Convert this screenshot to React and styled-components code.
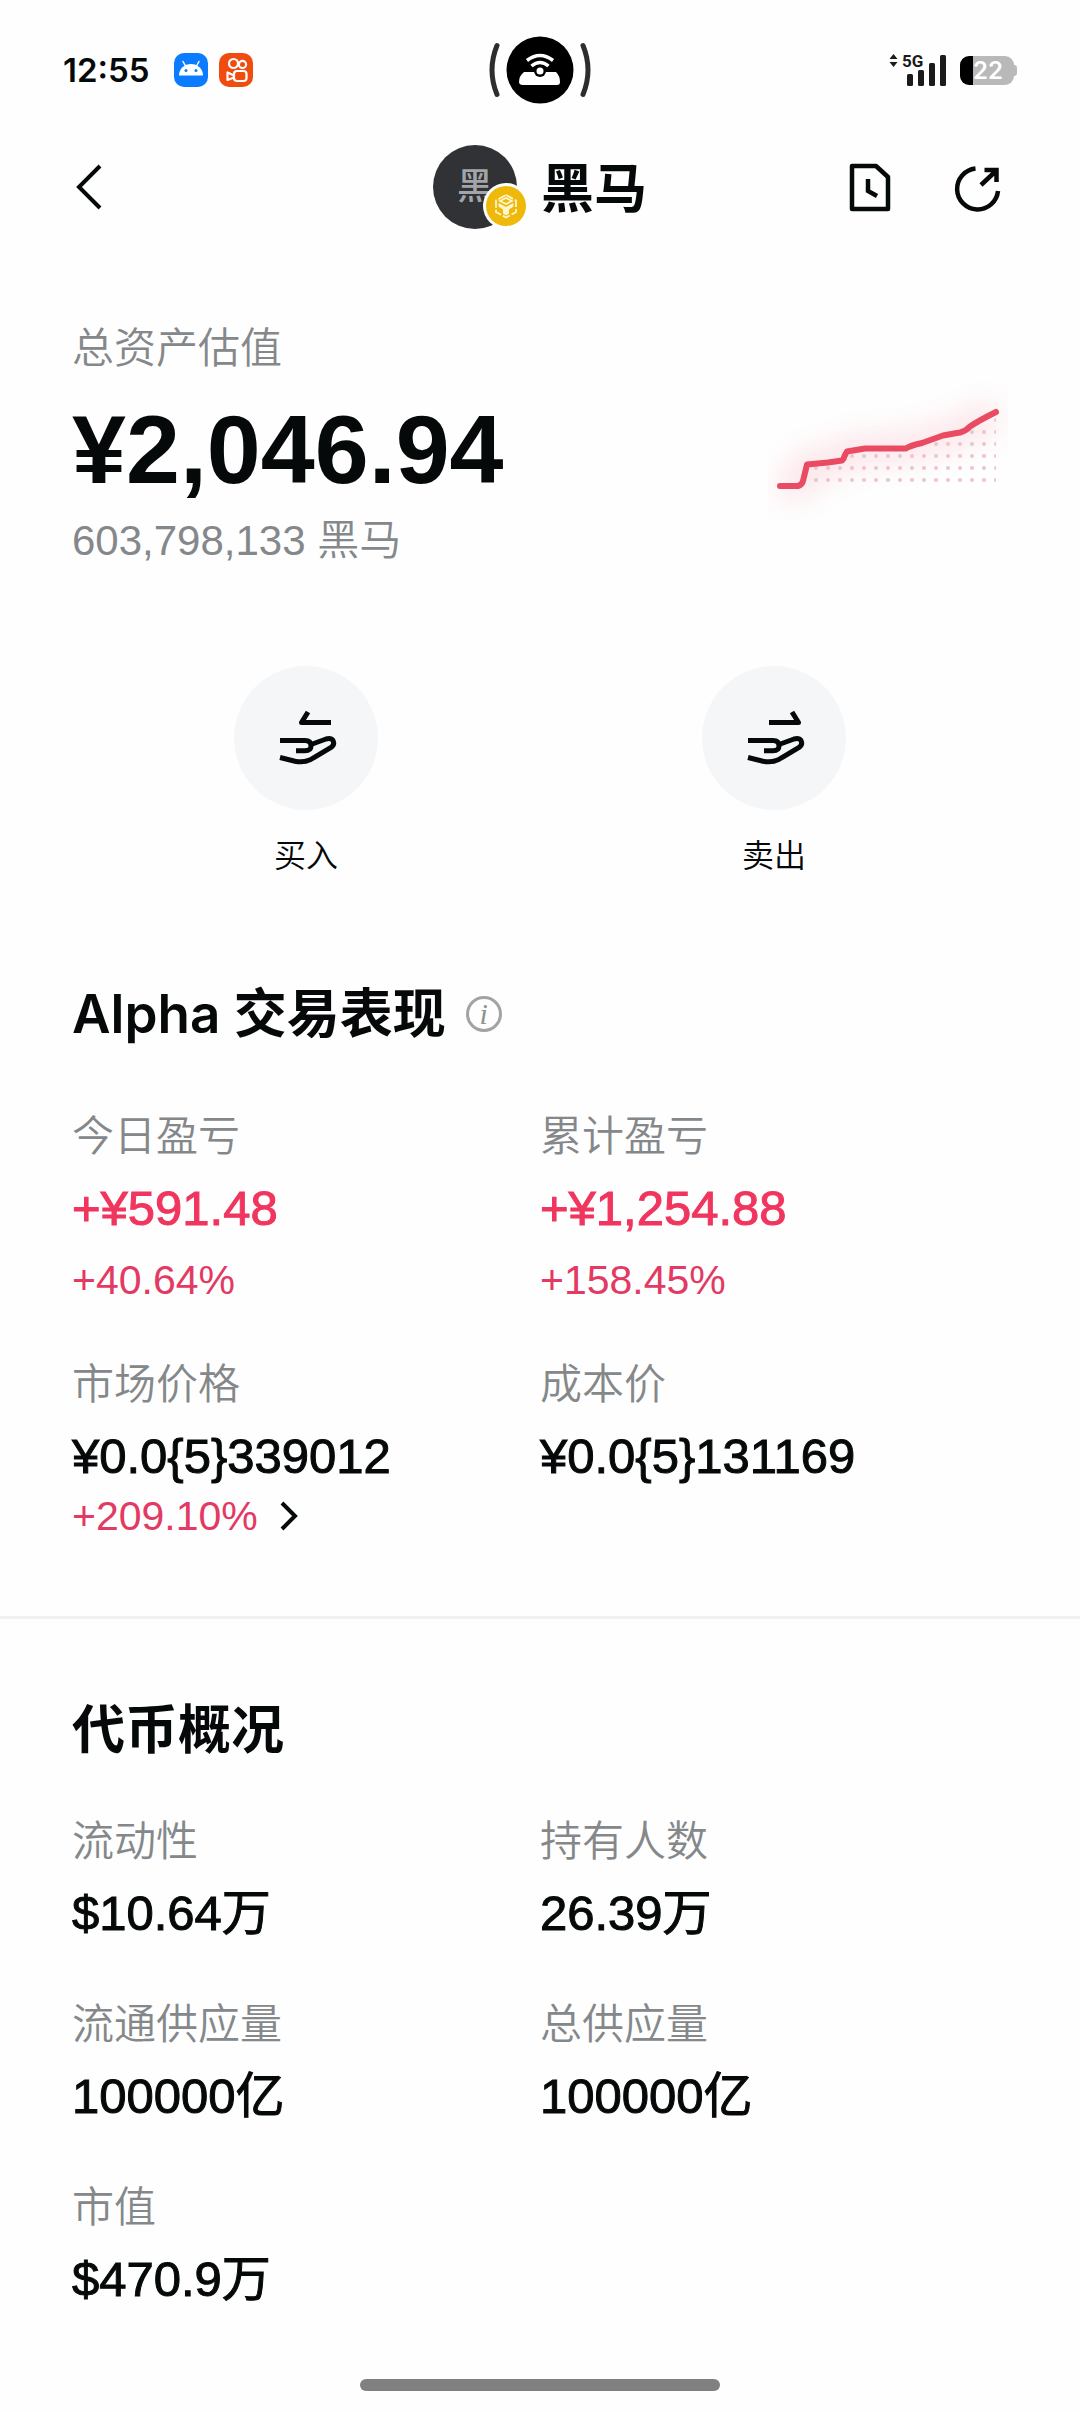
import React from "react";
import styled, { createGlobalStyle } from "styled-components";

const Globalstyle = createGlobalStyle`
*{
  padding: 0;
  margin: 0;
  box-sizing: border-box;
}
body {
  background: #fefefe;
  color: #060909;
  font-family: Inter, "Noto Sans CJK SC", sans-serif;
}
button {
  border: none;
  background: none;
  color: inherit;
  font: inherit;
}
svg {
  display: block;
}
`
const Page = styled.div`
  min-height: 100vh;
  display: flex;
  flex-direction: column;
`
const StatusBar = styled.div`
  height: 140px;
  padding: 0 63px;
  display: grid;
  grid-template-columns: 1fr auto 1fr;
  align-items: center;
`
const StatusSide = styled.div`
  display: flex;
  align-items: center;
  justify-content: ${(p) => (p.$end ? "flex-end" : "flex-start")};
  gap: ${(p) => (p.$end ? "14px" : "11px")};
`
const Clock = styled.time`
  margin-right: 13px;
  font-size: 33px;
  font-weight: 600;
  line-height: 40px;
`
const Battery = styled.div`
  position: relative;
  width: 54px;
  height: 29px;
  margin-right: 3px;
  padding-left: 2px;
  border-radius: 9px;
  background: linear-gradient(to right, #000 13px, #b9b9b9 13px);
  color: #fff;
  font-size: 24px;
  font-weight: 600;
  line-height: 29px;
  text-align: center;
  &::after {
    content: "";
    position: absolute;
    top: 9px;
    right: -3px;
    width: 4px;
    height: 11px;
    border-radius: 0 3px 3px 0;
    background: #b9b9b9;
  }
`
const Header = styled.header`
  height: 94px;
  padding: 0 72px;
  display: grid;
  grid-template-columns: 1fr auto 1fr;
  align-items: center;
`
const HeaderActions = styled.div`
  display: flex;
  justify-content: flex-end;
  gap: 48px;
`
const IconButton = styled.button`
  width: 60px;
  height: 60px;
`
const Token = styled.div`
  display: flex;
  align-items: center;
  gap: 24px;
`
const Avatar = styled.div`
  position: relative;
  width: 84px;
  height: 84px;
  border-radius: 50%;
  background: #303236;
  color: #a3a5a8;
  font-size: 36px;
  font-weight: 500;
  line-height: 82px;
  text-align: center;
`
const ChainBadge = styled.span`
  position: absolute;
  right: -12px;
  bottom: 0;
`
const TokenName = styled.h1`
  padding-top: 3px;
  font-size: 53px;
  font-weight: 600;
  line-height: 64px;
`
const Summary = styled.section`
  padding: 84px 72px 0;
  display: flex;
  align-items: center;
  justify-content: space-between;
`
const Balance = styled.div`
  display: flex;
  flex-direction: column;
`
const Label = styled.dt`
  color: #85888a;
  font-size: 42px;
  font-weight: 350;
  line-height: 64px;
`
const BalanceLabel = styled(Label).attrs({ as: "p" })`
  line-height: 60px;
`
const Total = styled.p`
  margin: 24px 0 15px;
  font-family: "Liberation Sans", sans-serif;
  font-size: 97px;
  font-weight: 700;
  line-height: 96px;
`
const Holding = styled.p`
  color: #85888a;
  font-family: "Liberation Sans", "Noto Sans CJK SC", sans-serif;
  font-size: 42px;
  font-weight: 350;
  line-height: 56px;
`
const Actions = styled.nav`
  padding: 97px 72px 0;
  display: grid;
  grid-template-columns: 1fr 1fr;
  justify-items: center;
`
const Action = styled.button`
  display: flex;
  flex-direction: column;
  align-items: center;
  gap: 22px;
  font-size: 32px;
  font-weight: 350;
  line-height: 48px;
`
const ActionCircle = styled.span`
  width: 144px;
  height: 144px;
  border-radius: 50%;
  background: #f4f6f8;
  display: flex;
  align-items: center;
  justify-content: center;
`
const Section = styled.section`
  padding: ${(p) => p.$top}px 72px 0;
`
const SectionHead = styled.div`
  margin-bottom: ${(p) => p.$gap}px;
  display: flex;
  align-items: center;
  gap: 20px;
`
const SectionTitle = styled.h2`
  font-size: 53px;
  font-weight: 600;
  line-height: 64px;
`
const InfoButton = styled.button`
  width: 36px;
  height: 36px;
  border: 3px solid #a1a3a4;
  border-radius: 50%;
  color: #8f9192;
  font-family: "Liberation Serif", serif;
  font-size: 30px;
  font-style: italic;
  line-height: 28px;
`
const Grid = styled.dl`
  display: grid;
  grid-template-columns: 1fr 1fr;
  row-gap: ${(p) => p.$gap}px;
`
const Value = styled.dd`
  margin-top: 4px;
  color: ${(p) => (p.$up ? "#f0355e" : "inherit")};
  font-family: "Liberation Sans", "Noto Sans CJK SC", sans-serif;
  font-size: 49px;
  line-height: 72px;
  -webkit-text-stroke: 1px currentColor;
`
const Percent = styled.dd`
  margin-top: ${(p) => (p.$tight ? 0 : 12)}px;
  color: #e23a63;
  font-family: "Liberation Sans", "Noto Sans CJK SC", sans-serif;
  font-size: 41px;
  line-height: 48px;
`
const PercentLink = styled.a`
  color: inherit;
  text-decoration: none;
  display: inline-flex;
  align-items: center;
  gap: 22px;
`
const Divider = styled.hr`
  height: 3px;
  margin-top: 76px;
  border: none;
  background: #f1f1f2;
`
const HomeBar = styled.div`
  width: 360px;
  height: 12px;
  margin: auto auto 21px;
  border-radius: 6px;
  background: #808080;
`

const AndroidApp = () => (
  <svg width="34" height="34" viewBox="0 0 34 34">
    <rect width="34" height="34" rx="10" fill="#0b7bff" />
    <path d="M5 22.500a12 11.500 0 0 1 24 0z" fill="#fff" />
    <path d="M11.500 13L9 8.500M22.500 13L25 8.500" stroke="#fff" strokeWidth="1.500" strokeLinecap="round" />
    <circle cx="12" cy="17.500" r="1.500" fill="#0b7bff" />
    <circle cx="22" cy="17.500" r="1.500" fill="#0b7bff" />
  </svg>
)

const VideoApp = () => (
  <svg width="34" height="34" viewBox="0 0 34 34" fill="none" stroke="#fff" strokeWidth="2.200">
    <rect width="34" height="34" rx="10" fill="#f04c0f" stroke="none" />
    <circle cx="14.500" cy="10.500" r="4.500" />
    <circle cx="23.500" cy="11.500" r="3.600" />
    <rect x="15" y="18" width="12.500" height="10" rx="3" />
    <path d="M15 22.500L8.500 19.500V27L15 24.500" strokeLinejoin="round" />
  </svg>
)

const Island = () => (
  <svg width="104" height="70" viewBox="0 0 104 70" fill="none">
    <path d="M9 10.500Q-1 35 9 59.500M95 10.500Q105 35 95 59.500" stroke="#2d2d2d" strokeWidth="5" strokeLinecap="round" />
    <circle cx="52" cy="35" r="33.500" fill="#000" />
    <path d="M36 37H68Q72 41 72 47Q72 50 69 50H35Q31 50 31 47Q31 41 36 37Z" fill="#fff" />
    <circle cx="52" cy="36" r="6" fill="#000" />
    <circle cx="52" cy="36" r="3.500" fill="#fff" />
    <path d="M39 25.500Q52 15.500 65 25.500M43.500 31Q52 24 60.500 31" stroke="#fff" strokeWidth="3.500" />
  </svg>
)

const Signal = () => (
  <svg width="57" height="44" viewBox="0 -5 57 44" fill="#1b1b1b">
    <path d="M4.500 1L8.500 6H.5ZM4.500 14L.5 9H8.500Z" />
    <text x="13" y="14" fontFamily="Roboto, sans-serif" fontSize="17" fontWeight="700">5G</text>
    <rect x="18" y="21" width="6" height="12" rx="1.500" />
    <rect x="29" y="17" width="6" height="16" rx="1.500" />
    <rect x="40" y="10" width="6" height="23" rx="1.500" />
    <rect x="51" y="2" width="6" height="31" rx="1.500" />
  </svg>
)

const BackIcon = () => (
  <svg width="60" height="60" viewBox="0 0 60 60" fill="none" stroke="#060909" strokeWidth="4">
    <path d="M28 9L7 30L28 51" />
  </svg>
)

const HistoryIcon = () => (
  <svg width="60" height="60" viewBox="0 0 60 60" fill="none" stroke="#060909" strokeWidth="4.500" strokeLinejoin="round">
    <path d="M12 9H36L48 20V52H12Z" />
    <path d="M28 22V34L37 39" strokeLinejoin="miter" />
  </svg>
)

const ShareIcon = () => (
  <svg width="60" height="60" viewBox="0 0 60 60" fill="none" stroke="#060909" strokeWidth="4.500">
    <path d="M27.500 11.500A20.500 20.500 0 1 0 50 34" />
    <path d="M33 28L49 13M36.500 13H48.500V25" />
  </svg>
)

const BnbIcon = () => (
  <svg width="46" height="46" viewBox="0 0 46 46" fill="none">
    <circle cx="23" cy="23" r="23" fill="#fff" />
    <circle cx="23" cy="23" r="20" fill="#efb90b" />
    <path d="M23 12L33 17.500V29L23 34.500L13 29V17.500Z" stroke="#fff6cf" strokeWidth="1.800" strokeDasharray="8 2" />
    <path d="M17 18L23 15L29 18L23 21Z" stroke="#fff6cf" strokeWidth="1.600" />
    <path d="M15.500 20L23 24L30.500 20V23.500L26 26.500V30.500L23 32.500L20 30.500V26.500L15.500 23.500Z" fill="#fff6cf" />
  </svg>
)

const HandIcon = ({ arrow }) => (
  <svg width="72" height="72" viewBox="0 0 72 72" fill="none" stroke="#060909" strokeWidth="5">
    <path d={arrow} strokeLinejoin="round" />
    <path d="M10 38.500H35Q41 38.500 41 44Q41 48.700 35 48.700H26" />
    <path d="M10 55.500L25 59.200Q36 61.500 44 55.500L61 45.500Q65 42.500 63 38.500Q61 35.500 56 37L41 42.500" />
  </svg>
)

const ChevronIcon = () => (
  <svg width="18" height="30" viewBox="0 0 18 30" fill="none" stroke="#060909" strokeWidth="4">
    <path d="M2 2L15 15L2 28" />
  </svg>
)

// first dot of each row follows the line above it
const dotRows = [
  { y: 100, from: 76 },
  { y: 88, from: 76 },
  { y: 76, from: 112 },
  { y: 64, from: 196 },
  { y: 52, from: 232 },
  { y: 40, from: 256 },
]
const line =
  "M40 106H58Q62 105 63 101L67 84.500L88 82.500L102 80.500Q104 79 104.500 76L107 71.500L125 68.500H166Q169 66 182 63L203 55.500Q211 54 220 52.500Q226 51 230 46.500Q238 41 256 32"

const Chart = () => {
  const dots = []
  dotRows.forEach(({ y, from }) => {
    for (let x = from; x <= 256; x += 12) dots.push({ x, y })
  })
  return (
    <svg width="260" height="127" viewBox="8 0 260 127" fill="none" overflow="visible">
      <defs>
        <filter id="glow" filterUnits="userSpaceOnUse" x="28" y="-10" width="240" height="150">
          <feGaussianBlur stdDeviation="15" />
        </filter>
        <clipPath id="edge">
          <rect x="0" y="0" width="256" height="127" />
        </clipPath>
      </defs>
      <path d={line} stroke="#f0455f" strokeWidth="24" opacity="0.16" filter="url(#glow)" />
      <g clipPath="url(#edge)">
        {dots.map((d, i) => (
          <circle key={i} cx={d.x} cy={d.y} r="2" fill={i % 3 ? "#f3c1cb" : "#dccbd0"} />
        ))}
      </g>
      <path d={line} stroke="#e94b62" strokeWidth="6" strokeLinecap="round" strokeLinejoin="round" />
    </svg>
  )
}

const actions = [
  { name: "买入", arrow: "M61 20.500H31.500L38 10" },
  { name: "卖出", arrow: "M31 20.500H60.500L54 10" },
]

const performance = [
  { label: "今日盈亏", value: "+¥591.48", percent: "+40.64%", up: true },
  { label: "累计盈亏", value: "+¥1,254.88", percent: "+158.45%", up: true },
  { label: "市场价格", value: "¥0.0{5}339012", percent: "+209.10%", link: true },
  { label: "成本价", value: "¥0.0{5}131169" },
]

const overview = [
  { label: "流动性", value: "$10.64万" },
  { label: "持有人数", value: "26.39万" },
  { label: "流通供应量", value: "100000亿" },
  { label: "总供应量", value: "100000亿" },
  { label: "市值", value: "$470.9万" },
]

const Stat = ({ label, value, percent, up, link }) => (
  <div>
    <Label>{label}</Label>
    <Value $up={up}>{value}</Value>
    {percent && (
      <Percent $tight={link}>
        {link ? <PercentLink href="#market">{percent}<ChevronIcon /></PercentLink> : percent}
      </Percent>
    )}
  </div>
)

const App = () => (
  <Page>
    <Globalstyle />
    <StatusBar>
      <StatusSide>
        <Clock>12:55</Clock>
        <AndroidApp />
        <VideoApp />
      </StatusSide>
      <Island />
      <StatusSide $end>
        <Signal />
        <Battery>22</Battery>
      </StatusSide>
    </StatusBar>
    <Header>
      <IconButton aria-label="返回"><BackIcon /></IconButton>
      <Token>
        <Avatar>
          黑
          <ChainBadge><BnbIcon /></ChainBadge>
        </Avatar>
        <TokenName>黑马</TokenName>
      </Token>
      <HeaderActions>
        <IconButton aria-label="历史"><HistoryIcon /></IconButton>
        <IconButton aria-label="分享"><ShareIcon /></IconButton>
      </HeaderActions>
    </Header>
    <Summary>
      <Balance>
        <BalanceLabel>总资产估值</BalanceLabel>
        <Total>¥2,046.94</Total>
        <Holding>603,798,133 黑马</Holding>
      </Balance>
      <Chart />
    </Summary>
    <Actions>
      {actions.map((a) => (
        <Action key={a.name}>
          <ActionCircle><HandIcon arrow={a.arrow} /></ActionCircle>
          {a.name}
        </Action>
      ))}
    </Actions>
    <Section $top={102}>
      <SectionHead $gap={58}>
        <SectionTitle>Alpha 交易表现</SectionTitle>
        <InfoButton aria-label="说明">i</InfoButton>
      </SectionHead>
      <Grid $gap={48}>
        {performance.map((s) => <Stat key={s.label} {...s} />)}
      </Grid>
    </Section>
    <Divider />
    <Section $top={79}>
      <SectionHead $gap={47}>
        <SectionTitle>代币概况</SectionTitle>
      </SectionHead>
      <Grid $gap={43}>
        {overview.map((s) => <Stat key={s.label} {...s} />)}
      </Grid>
    </Section>
    <HomeBar />
  </Page>
)

export default App;
